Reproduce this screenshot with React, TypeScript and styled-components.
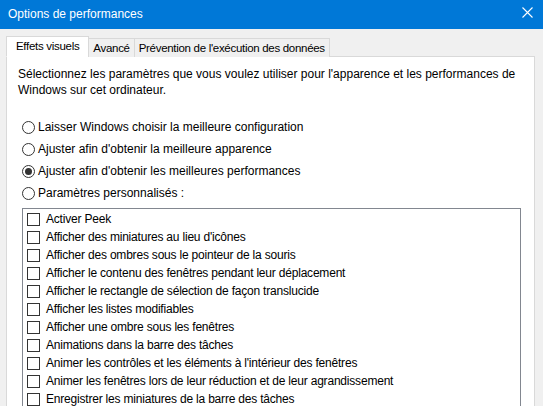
import React from 'react';
import styled, { createGlobalStyle } from 'styled-components';

const GlobalStyle = createGlobalStyle`
  html, body {
    margin: 0;
    padding: 0;
    background: #f0f0f0;
    overflow: hidden;
  }
  body {
    font-family: "Liberation Sans", Arial, sans-serif;
    font-size: 12px;
    color: #000;
  }
`;

const effects = [
  'Activer Peek',
  "Afficher des miniatures au lieu d'icônes",
  'Afficher des ombres sous le pointeur de la souris',
  'Afficher le contenu des fenêtres pendant leur déplacement',
  'Afficher le rectangle de sélection de façon translucide',
  'Afficher les listes modifiables',
  'Afficher une ombre sous les fenêtres',
  'Animations dans la barre des tâches',
  "Animer les contrôles et les éléments à l'intérieur des fenêtres",
  'Animer les fenêtres lors de leur réduction et de leur agrandissement',
  'Enregistrer les miniatures de la barre des tâches',
];

const modes = [
  'Laisser Windows choisir la meilleure configuration',
  "Ajuster afin d'obtenir la meilleure apparence",
  "Ajuster afin d'obtenir les meilleures performances",
  'Paramètres personnalisés :',
];

const tabs = ['Effets visuels', 'Avancé', "Prévention de l'exécution des données"];

export default function App() {
  return (
    <>
      <GlobalStyle />
      <Window>
        <TitleBar>
          <Title>Options de performances</Title>
          <Close>
            <svg width="11" height="11" viewBox="0 0 11 11">
              <path d="M0.5 0.5 L10.5 10.5 M10.5 0.5 L0.5 10.5" stroke="#fff" strokeWidth="1.1" />
            </svg>
          </Close>
        </TitleBar>
        <Body>
          <TabStrip>
            {tabs.map((t, i) => (
              <Tab key={t} active={i === 0}>{t}</Tab>
            ))}
          </TabStrip>
          <Panel>
            <Intro>
              Sélectionnez les paramètres que vous voulez utiliser pour l'apparence et les performances de
              <br />
              Windows sur cet ordinateur.
            </Intro>
            <Radios>
              {modes.map((m, i) => (
                <RadioRow key={m}>
                  <Radio checked={i === 2} />
                  <span>{m}</span>
                </RadioRow>
              ))}
            </Radios>
            <ListBox>
              {effects.map((e) => (
                <CheckRow key={e}>
                  <Check />
                  <span>{e}</span>
                </CheckRow>
              ))}
            </ListBox>
          </Panel>
        </Body>
      </Window>
    </>
  );
}

const Window = styled('div')`
  width: 543px;
  height: 406px;
  overflow: hidden;
  background: #f0f0f0;
`;

const TitleBar = styled('div')`
  height: 29px;
  background: #0078d7;
  display: flex;
  align-items: center;
  justify-content: space-between;
  padding: 0 10px 0 8px;
  box-sizing: border-box;
`;

const Title = styled('div')`
  color: #fff;
  font-size: 12px;
  margin-top: -1px;
`;

const Close = styled('div')`
  display: flex;
  align-items: center;
  margin-top: -4px;
`;

const Body = styled('div')`
  padding: 7px 8px 0 6px;
`;

const TabStrip = styled('div')`
  display: flex;
  align-items: flex-end;
  height: 21px;
  position: relative;
  z-index: 1;
`;

// Segoe UI is narrower than Liberation Sans, tighten the tab labels a bit
const Tab = styled('div')<{ active?: boolean }>`
  height: ${(p) => (p.active ? '21px' : '19px')};
  line-height: ${(p) => (p.active ? '19px' : '18px')};
  padding: 0 ${(p) => (p.active ? '9px' : '4px')};
  font-size: 11.5px;
  letter-spacing: -0.3px;
  background: ${(p) => (p.active ? '#fff' : '#f0f0f0')};
  border: 1px solid #d9d9d9;
  border-bottom: ${(p) => (p.active ? '1px solid #fff' : 'none')};
  margin-left: -1px;
  box-sizing: border-box;
  white-space: nowrap;
  &:first-child {
    margin-left: 0;
  }
`;

const Panel = styled('div')`
  margin-top: -1px;
  background: #fff;
  border: 1px solid #d9d9d9;
  height: 400px;
  padding: 9px 13px 0 11px;
  box-sizing: border-box;
`;

const Intro = styled('p')`
  margin: 0;
  line-height: 16px;
  white-space: nowrap;
`;

const Radios = styled('div')`
  margin-top: 21px;
  display: flex;
  flex-direction: column;
  gap: 6px;
`;

const RadioRow = styled('label')`
  display: flex;
  align-items: center;
  gap: 3px;
  height: 16px;
  padding-left: 4px;
`;

const Radio = styled('span')<{ checked?: boolean }>`
  width: 13px;
  height: 13px;
  border: 1px solid #333;
  border-radius: 50%;
  box-sizing: border-box;
  display: inline-flex;
  align-items: center;
  justify-content: center;
  &::after {
    content: '';
    width: 7px;
    height: 7px;
    border-radius: 50%;
    background: ${(p) => (p.checked ? '#333' : 'transparent')};
  }
`;

const ListBox = styled('div')`
  margin: 7px 0 0 4px;
  border: 1px solid #828790;
  padding: 1px 0 0 4px;
`;

const CheckRow = styled('div')`
  display: flex;
  align-items: center;
  gap: 6px;
  height: 18px;
  letter-spacing: -0.2px;
`;

const Check = styled('span')`
  width: 13px;
  height: 13px;
  border: 1px solid #333;
  box-sizing: border-box;
  background: #fff;
`;
